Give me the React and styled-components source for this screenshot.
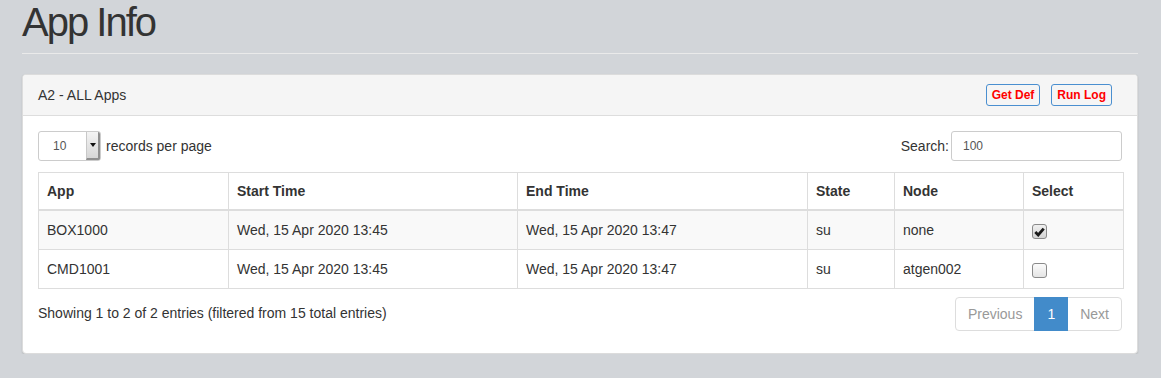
import React from "react";
import styled, { createGlobalStyle } from "styled-components";

const GlobalStyle = createGlobalStyle`
  html, body { margin: 0; padding: 0; }
  body {
    background: #d2d5d9;
    font-family: "Liberation Sans", Arial, sans-serif;
    font-size: 14px;
    line-height: 20px;
    color: #333;
  }
`;

const Page = styled.div`
  padding: 0 23px 0 22px;
`;

const Title = styled.h1`
  margin: 0;
  font-size: 40px;
  line-height: 44px;
  font-weight: normal;
  letter-spacing: -2px;
  color: #333;
`;

const Rule = styled.hr`
  margin: 9px 0 20px;
  border: 0;
  border-top: 1px solid #eaeaea;
`;

const Panel = styled.div`
  background: #fff;
  border: 1px solid #dcdcdc;
  border-radius: 4px;
  box-shadow: 0 1px 2px rgba(0, 0, 0, 0.12);
`;

const PanelHeading = styled.div`
  display: flex;
  align-items: center;
  justify-content: space-between;
  padding: 9px 15px;
  background: #f5f5f5;
  border-bottom: 1px solid #ddd;
  border-radius: 3px 3px 0 0;
`;

const ButtonGroup = styled.div`
  display: flex;
  gap: 11px;
  margin-right: 10px;
`;

const XsButton = styled.button`
  font-family: "Liberation Sans", Arial, sans-serif;
  font-size: 12px;
  line-height: 18px;
  font-weight: bold;
  color: #ff0000;
  background: transparent;
  border: 1px solid #4a8fd0;
  border-radius: 3px;
  padding: 1px 5px;
`;

const PanelBody = styled.div`
  padding: 15px;
`;

const Toolbar = styled.div`
  display: flex;
  align-items: center;
  justify-content: space-between;
  margin-bottom: 11px;
`;

const LengthLabel = styled.label`
  display: flex;
  align-items: center;
  gap: 5px;
`;

const FakeSelect = styled.div`
  display: flex;
  width: 63px;
  height: 30px;
  box-sizing: border-box;
  border: 1px solid #ccc;
  border-radius: 3px;
  overflow: hidden;
  font-size: 12px;
`;

const SelectValue = styled.span`
  flex: 1;
  display: flex;
  align-items: center;
  padding-left: 14px;
  color: #555;
`;

const SelectArrow = styled.span`
  width: 11px;
  display: flex;
  align-items: center;
  justify-content: center;
  background: linear-gradient(#f4f4f4, #d6d6d6);
  border-left: 1px solid #c8c8c8;
  border-right: 2px solid #8f8f8f;
  border-bottom: 2px solid #8f8f8f;
  &::after {
    content: "";
    border-left: 3px solid transparent;
    border-right: 3px solid transparent;
    border-top: 4px solid #111;
  }
`;

const SearchLabel = styled.label`
  display: flex;
  align-items: center;
  gap: 2px;
`;

const SearchInput = styled.div`
  width: 171px;
  height: 30px;
  box-sizing: border-box;
  border: 1px solid #ccc;
  border-radius: 3px;
  padding: 0 11px;
  display: flex;
  align-items: center;
  font-size: 12px;
  color: #555;
`;

const Table = styled.table`
  width: 100%;
  table-layout: fixed;
  border-collapse: collapse;
  border: 1px solid #ddd;
`;

const Th = styled.th`
  text-align: left;
  font-weight: bold;
  padding: 8px;
  line-height: 20px;
  border: 1px solid #ddd;
  border-bottom: 2px solid #ddd;
`;

const Row = styled.tr`
  background: ${(p) => (p.$striped ? "#f9f9f9" : "#fff")};
`;

const Td = styled.td`
  padding: 8px;
  line-height: 22px;
  border: 1px solid #ddd;
`;

const Check = styled.span`
  display: inline-flex;
  vertical-align: middle;
  align-items: center;
  justify-content: center;
  width: 15px;
  height: 15px;
  box-sizing: border-box;
  border: 1px solid #8a8a8a;
  border-radius: 3px;
  background: ${(p) =>
    p.$checked ? "linear-gradient(#f0f0f0, #d4d4d4)" : "linear-gradient(#fbfbfb, #e4e4e4)"};
  margin-top: 1px;
`;

const Footer = styled.div`
  display: flex;
  justify-content: space-between;
  align-items: flex-start;
  margin-top: 8px;
`;

const Info = styled.div`
  padding-top: 6px;
`;

const Pagination = styled.ul`
  display: flex;
  list-style: none;
  margin: 0 0 7px;
  padding: 0;
`;

const PageItem = styled.li`
  padding: 6px 12px;
  line-height: 20px;
  border: 1px solid ${(p) => (p.$active ? "#428bca" : "#ddd")};
  margin-left: -1px;
  color: ${(p) => (p.$active ? "#fff" : "#999")};
  background: ${(p) => (p.$active ? "#428bca" : "#fff")};
  position: relative;
  z-index: ${(p) => (p.$active ? 1 : 0)};
  &:first-child {
    margin-left: 0;
    border-radius: 4px 0 0 4px;
  }
  &:last-child {
    border-radius: 0 4px 4px 0;
  }
`;

const CheckBox = ({ checked }) => (
  <Check $checked={checked}>
    {checked && (
      <svg width="11" height="10" viewBox="0 0 11 10">
        <path d="M1.3 5 L4.2 8 L9.7 1.6" fill="none" stroke="#1a1a1a" strokeWidth="2.8" />
      </svg>
    )}
  </Check>
);

const rows = [
  { app: "BOX1000", start: "Wed, 15 Apr 2020 13:45", end: "Wed, 15 Apr 2020 13:47", state: "su", node: "none", checked: true },
  { app: "CMD1001", start: "Wed, 15 Apr 2020 13:45", end: "Wed, 15 Apr 2020 13:47", state: "su", node: "atgen002", checked: false },
];

export default function App() {
  return (
    <>
      <GlobalStyle />
      <Page>
        <Title>App Info</Title>
        <Rule />
        <Panel>
          <PanelHeading>
            <span>A2 - ALL Apps</span>
            <ButtonGroup>
              <XsButton>Get Def</XsButton>
              <XsButton>Run Log</XsButton>
            </ButtonGroup>
          </PanelHeading>
          <PanelBody>
            <Toolbar>
              <LengthLabel>
                <FakeSelect>
                  <SelectValue>10</SelectValue>
                  <SelectArrow />
                </FakeSelect>
                records per page
              </LengthLabel>
              <SearchLabel>
                Search:
                <SearchInput>100</SearchInput>
              </SearchLabel>
            </Toolbar>
            <Table>
              <colgroup>
                <col style={{ width: 190 }} />
                <col style={{ width: 289 }} />
                <col style={{ width: 290 }} />
                <col style={{ width: 87 }} />
                <col style={{ width: 129 }} />
                <col style={{ width: 100 }} />
              </colgroup>
              <thead>
                <tr>
                  <Th>App</Th>
                  <Th>Start Time</Th>
                  <Th>End Time</Th>
                  <Th>State</Th>
                  <Th>Node</Th>
                  <Th>Select</Th>
                </tr>
              </thead>
              <tbody>
                {rows.map((r, i) => (
                  <Row key={r.app} $striped={i % 2 === 0}>
                    <Td>{r.app}</Td>
                    <Td>{r.start}</Td>
                    <Td>{r.end}</Td>
                    <Td>{r.state}</Td>
                    <Td>{r.node}</Td>
                    <Td>
                      <CheckBox checked={r.checked} />
                    </Td>
                  </Row>
                ))}
              </tbody>
            </Table>
            <Footer>
              <Info>Showing 1 to 2 of 2 entries (filtered from 15 total entries)</Info>
              <Pagination>
                <PageItem>Previous</PageItem>
                <PageItem $active>1</PageItem>
                <PageItem>Next</PageItem>
              </Pagination>
            </Footer>
          </PanelBody>
        </Panel>
      </Page>
    </>
  );
}
